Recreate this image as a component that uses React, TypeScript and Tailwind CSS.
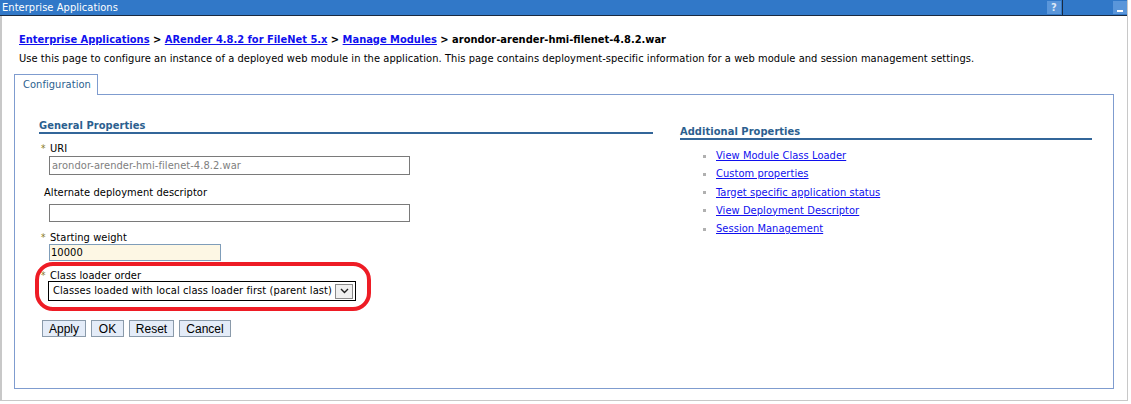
import React from 'react';

const links = [
  'View Module Class Loader',
  'Custom properties',
  'Target specific application status',
  'View Deployment Descriptor',
  'Session Management',
];

function Star() {
  return <span className="inline-block w-[8px] text-[#8a7a1a] text-[10px] leading-none mr-[1px]">*</span>;
}

function Btn({ label, w }: { label: string; w: string }) {
  return (
    <button
      className={`${w} h-[17px] border border-[#8a9aaa] bg-[#e4ecf8] text-[12px] leading-none text-black tracking-normal font-['Liberation_Sans',sans-serif]`}
    >
      {label}
    </button>
  );
}

export default function App() {
  return (
    <div className="relative w-[1131px] h-[404px] bg-white overflow-hidden font-['DejaVu_Sans_Condensed','DejaVu_Sans',sans-serif] text-[11px] tracking-[0.06px] text-black">
      <div className="w-[1128px] h-[401px] flex flex-col border-r border-b border-[#c8c8c8]">
        {/* title bar */}
        <div className="h-[16px] flex items-stretch bg-[#3178c8] border-b border-[#1a2a40] text-white">
          <div className="flex-1 pl-[2px] leading-[15px]">Enterprise Applications</div>
          <div className="w-[14px] my-[1px] bg-[#5a96da] text-center text-[11px] leading-[13px] font-bold text-[#dfe9f6]">?</div>
          <div className="w-[1px] bg-[#1a2a40] ml-[1px]"></div>
          <div className="w-[50px]"></div>
          <div className="w-[14px] my-[1px] bg-[#5a96da] flex items-end justify-center pb-[2px]">
            <div className="w-[6px] h-[2px] bg-white"></div>
          </div>
        </div>

        <div className="flex-1 border-l-2 border-[#c8c8c8] pl-[12px] pt-[17px]">
          {/* breadcrumb */}
          <div className="pl-[5px] font-bold leading-[14px] tracking-normal">
            <a className="text-[#1010ee] underline">Enterprise Applications</a>
            {' > '}
            <a className="text-[#1010ee] underline">ARender 4.8.2 for FileNet 5.x</a>
            {' > '}
            <a className="text-[#1010ee] underline">Manage Modules</a>
            {' > arondor-arender-hmi-filenet-4.8.2.war'}
          </div>
          <div className="pl-[5px] mt-[5px] leading-[14px]">
            Use this page to configure an instance of a deployed web module in the application. This page contains deployment-specific information for a web module and session management settings.
          </div>

          {/* tab */}
          <div className="mt-[8px] w-[1100px]">
            <div className="relative z-10 w-[84px] h-[21px] border border-b-0 border-[#7f9ccf] bg-white text-[#2c5f8f] leading-[20px] pl-[8px]">
              Configuration
            </div>
            <div className="-mt-[1px] h-[295px] border border-[#7f9ccf] flex pl-[24px] pr-[21px]">
              {/* general properties */}
              <div className="w-[614px] pt-[25px]">
                <div className="font-bold text-[#2c5f8f] leading-[12px] border-b-2 border-[#336699]">General Properties</div>
                <div className="mt-[8px] pl-[2px] leading-[13px] flex items-center"><Star />URI</div>
                <input
                  readOnly
                  value="arondor-arender-hmi-filenet-4.8.2.war"
                  className="block ml-[10px] mt-[1px] w-[361px] h-[19px] border border-[#7a7a7a] px-[2px] text-[11px] text-[#808080] outline-none"
                />
                <div className="mt-[11px] pl-[5px] leading-[13px]">Alternate deployment descriptor</div>
                <input
                  readOnly
                  value=""
                  className="block ml-[10px] mt-[5px] w-[361px] h-[18px] border border-[#7a7a7a] px-[2px] outline-none"
                />
                <div className="mt-[9px] pl-[2px] leading-[13px] flex items-center"><Star />Starting weight</div>
                <input
                  readOnly
                  value="10000"
                  className="block ml-[10px] mt-0 w-[172px] h-[17px] border border-[#7f9db9] bg-[#fdf7e4] px-[1px] text-[11px] outline-none"
                />
                <div className="mt-[8px] pl-[2px] leading-[13px] flex items-center"><Star />Class loader order</div>
                <div className="ml-[9px] -mt-[1px] w-[308px] h-[20px] border border-black flex items-center pl-[4px] pr-[2px]">
                  <span className="flex-1 text-[11px] tracking-[0.1px]">Classes loaded with local class loader first (parent last)</span>
                  <span className="w-[18px] h-[15px] border border-[#8a8a8a] bg-[#f0f0f0] flex items-center justify-center">
                    <svg width="9" height="6" viewBox="0 0 9 6"><path d="M1 1 L4.5 4.5 L8 1" stroke="#222" strokeWidth="1.4" fill="none" /></svg>
                  </span>
                </div>
                <div className="flex gap-[5px] mt-[19px] ml-[3px]">
                  <Btn label="Apply" w="w-[44px]" />
                  <Btn label="OK" w="w-[33px]" />
                  <Btn label="Reset" w="w-[45px]" />
                  <Btn label="Cancel" w="w-[52px]" />
                </div>
              </div>
              <div className="w-[27px]"></div>
              {/* additional properties */}
              <div className="flex-1 pt-[31px]">
                <div className="font-bold text-[#2c5f8f] leading-[12px] border-b-2 border-[#336699]">Additional Properties</div>
                <ul className="mt-[9px] pl-[23px] flex flex-col gap-[4.25px]">
                  {links.map((l) => (
                    <li key={l} className="flex items-center leading-[14px]">
                      <span className="w-[3px] h-[3px] bg-[#b0b0b0] mr-[10px]"></span>
                      <a className="text-[#1010ee] underline">{l}</a>
                    </li>
                  ))}
                </ul>
              </div>
            </div>
          </div>
        </div>
      </div>

      {/* red highlight drawn over the form */}
      <div className="absolute left-[35px] top-[262px] w-[336px] h-[49px] border-[4px] border-[#ee1c25] rounded-[18px]"></div>
    </div>
  );
}
